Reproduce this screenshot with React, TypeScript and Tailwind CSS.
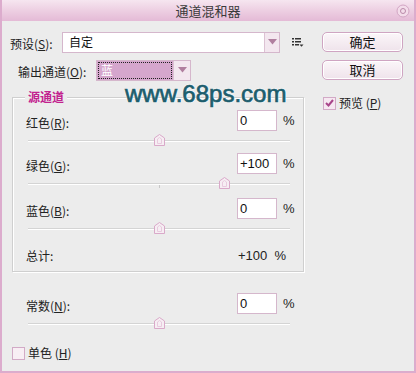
import React from "react";

const font = { fontFamily: '"Noto Sans CJK SC", "Liberation Sans", sans-serif' };

function Thumb({ left }: { left: number }) {
  return (
    <svg
      width="11"
      height="12"
      viewBox="0 0 11 12"
      className="absolute top-0"
      style={{ left }}
    >
      <path d="M0.5 4 L5.5 0.5 L10.5 4 L10.5 11.5 L0.5 11.5 Z" fill="#f6eef3" stroke="#d9a9c9" />
      <path d="M3.5 5 L5.5 3.5 L7.5 5 L7.5 9.5 L3.5 9.5 Z" fill="none" stroke="#e8cade" />
    </svg>
  );
}

function Slider({ pos, tick }: { pos: number; tick?: boolean }) {
  return (
    <div className="relative h-[12px] w-[262px] ml-[2px] mt-[3px]">
      <div className="absolute left-0 right-0 top-[6px] h-[1px] bg-[#d4d4d4]" />
      <div className="absolute left-0 right-0 top-[7px] h-[1px] bg-white" />
      {tick && <div className="absolute left-[131px] top-[8px] w-[1px] h-[3px] bg-[#c8c8c8]" />}
      <Thumb left={pos} />
    </div>
  );
}

function Label({ text, k }: { text: string; k: string }) {
  return (
    <span className="text-[12px] text-[#222]">
      {text}(<span className="underline">{k}</span>):
    </span>
  );
}

function ValueRow({ label, k, value }: { label: string; k: string; value: string }) {
  return (
    <div className="flex items-center h-[21px] pr-[6px]">
      <div className="flex-1">
        <Label text={label} k={k} />
      </div>
      <div className="w-[40px] h-[21px] bg-white border border-[#d5b7cc] flex items-center pl-[2px] text-[12px] text-[#111]" style={{ fontFamily: '"Liberation Sans", sans-serif', fontSize: 13 }}>
        {value}
      </div>
      <span className="w-[14px] ml-[6px] text-[12px] text-[#222]" style={{ fontFamily: '"Liberation Sans", sans-serif', fontSize: 13 }}>%</span>
    </div>
  );
}

function Arrow() {
  return (
    <svg width="9" height="6" viewBox="0 0 9 6">
      <path d="M0 0 L9 0 L4.5 5.5 Z" fill="#b07f9f" />
    </svg>
  );
}

function Button({ children }: { children: React.ReactNode }) {
  return (
    <div className="w-[81px] h-[20px] rounded-[5px] border border-[#cfa5c2] bg-gradient-to-b from-[#fbf6f9] to-[#efe3eb] flex items-center justify-center text-[13px] text-[#111] shadow-[inset_0_0_0_1px_#ffffff]">
      {children}
    </div>
  );
}

export default function App() {
  return (
    <div className="w-[416px] h-[373px] flex flex-col bg-[#ececec]" style={font}>
      {/* Title bar */}
      <div className="relative h-[21px] shrink-0 flex items-center justify-center bg-gradient-to-b from-[#f6e6f0] via-[#edcfe2] to-[#e4bad6] border-x-2 border-[#dcaccd]">
        <span className="text-[13px] text-[#3a3a3a]">通道混和器</span>
        <svg width="14" height="14" viewBox="0 0 14 14" className="absolute right-[4px] top-[4px]">
          <circle cx="7" cy="7" r="6" fill="#f3dcea" stroke="#d2a6c4" />
          <circle cx="7" cy="7" r="2.5" fill="none" stroke="#b98aa9" />
        </svg>
      </div>

      {/* Body */}
      <div className="relative flex-1 flex border-x-2 border-b-2 border-[#dcaccd]">
        {/* Left column */}
        <div className="w-[320px] pl-[8px] pt-[11px] flex flex-col">
          {/* Preset row */}
          <div className="flex items-center h-[20px]">
            <div className="w-[52px]">
              <Label text="预设" k="S" />
            </div>
            <div className="w-[218px] h-[21px] bg-white border border-[#d5b7cc] flex items-center">
              <span className="flex-1 pl-[6px] text-[12px] text-[#111]">自定</span>
              <div className="w-[15px] h-[19px] bg-[#f3e7ef] border-l border-[#dcc2d3] flex items-center justify-center">
                <Arrow />
              </div>
            </div>
            <svg width="12" height="10" viewBox="0 0 12 10" className="ml-[12px]">
              <rect x="0" y="1" width="2" height="1.5" fill="#333" />
              <rect x="3" y="1" width="6" height="1.5" fill="#333" />
              <rect x="0" y="4" width="2" height="1.5" fill="#333" />
              <rect x="3" y="4" width="6" height="1.5" fill="#333" />
              <rect x="0" y="7" width="2" height="1.5" fill="#333" />
              <rect x="3" y="7" width="4" height="1.5" fill="#333" />
              <path d="M7.5 7.5 L11.5 7.5 L9.5 9.8 Z" fill="#333" />
            </svg>
          </div>

          {/* Output channel row */}
          <div className="flex items-center h-[20px] mt-[8px] pl-[8px]">
            <div className="w-[78px]">
              <Label text="输出通道" k="O" />
            </div>
            <div className="flex h-[21px] border border-[#d5b7cc]">
              <div className="w-[76px] h-[19px] bg-[#d5a6cd] p-[1px]">
                <div className="w-full h-full border border-dotted border-[#222] flex items-center pl-[2px] text-[12px] text-white">
                  蓝
                </div>
              </div>
              <div className="w-[17px] h-[19px] bg-[#f3e7ef] border-l border-[#dcc2d3] flex items-center justify-center">
                <Arrow />
              </div>
            </div>
          </div>

          {/* Group box */}
          <div className="ml-[2px] mt-[17px] w-[292px] h-[175px] border border-[#cfcfcf] shadow-[inset_1px_1px_0_#ffffff,1px_1px_0_#ffffff] flex flex-col">
            <span className="self-start ml-[12px] -mt-[9px] px-[3px] bg-[#ececec] text-[12px] font-bold text-[#c2228f] leading-[16px]">
              源通道
            </span>
            <div className="pl-[13px] flex flex-col mt-[5px]">
              <ValueRow label="红色" k="R" value="0" />
              <Slider pos={126} />
              <div className="mt-[7px]">
                <ValueRow label="绿色" k="G" value="+100" />
              </div>
              <Slider pos={191} tick />
              <div className="mt-[9px]">
                <ValueRow label="蓝色" k="B" value="0" />
              </div>
              <Slider pos={126} />
              <div className="flex items-center h-[20px] mt-[12px] pr-[6px]">
                <span className="flex-1 text-[12px] text-[#222]">总计:</span>
                <span className="w-[60px] pl-[1px] text-[#222]" style={{ fontFamily: '"Liberation Sans", sans-serif', fontSize: 13 }}>
                  +100&nbsp;&nbsp;%
                </span>
              </div>
            </div>
          </div>

          {/* Constant */}
          <div className="pl-[16px] mt-[21px] flex flex-col w-[293px]">
            <ValueRow label="常数" k="N" value="0" />
            <Slider pos={126} />
          </div>

          {/* Monochrome */}
          <div className="flex items-center mt-[15px] ml-[2px]">
            <div className="w-[13px] h-[13px] border border-[#d2aac6] bg-[#f8eef4]" />
            <span className="ml-[3px] text-[12px] text-[#222]">
              单色 (<span className="underline">H</span>)
            </span>
          </div>
        </div>

        {/* Right column */}
        <div className="pt-[11px] flex flex-col">
          <Button>确定</Button>
          <div className="mt-[8px]">
            <Button>取消</Button>
          </div>
          <div className="flex items-center mt-[14px] ml-[1px]">
            <div className="w-[13px] h-[13px] border border-[#d2aac6] bg-[#f6e8f1] flex items-center justify-center">
              <svg width="9" height="8" viewBox="0 0 9 8">
                <path d="M1 4 L3.5 6.5 L8 1" fill="none" stroke="#a8468a" strokeWidth="2" />
              </svg>
            </div>
            <span className="ml-[3px] text-[12px] text-[#222]">
              预览 (<span className="underline">P</span>)
            </span>
          </div>
        </div>

        {/* Watermark overlay */}
        <div
          className="absolute left-[123px] top-[59px] text-[24px] leading-[28px] text-[#1c5d6d] [text-shadow:0_0_2px_#ffffff,0_0_2px_#ffffff,0_0_1px_#ffffff] [-webkit-text-stroke:0.7px_#1c5d6d]"
          style={{ fontFamily: '"Liberation Sans", Arial, sans-serif' }}
        >
          www.68ps.com
        </div>
      </div>
    </div>
  );
}
